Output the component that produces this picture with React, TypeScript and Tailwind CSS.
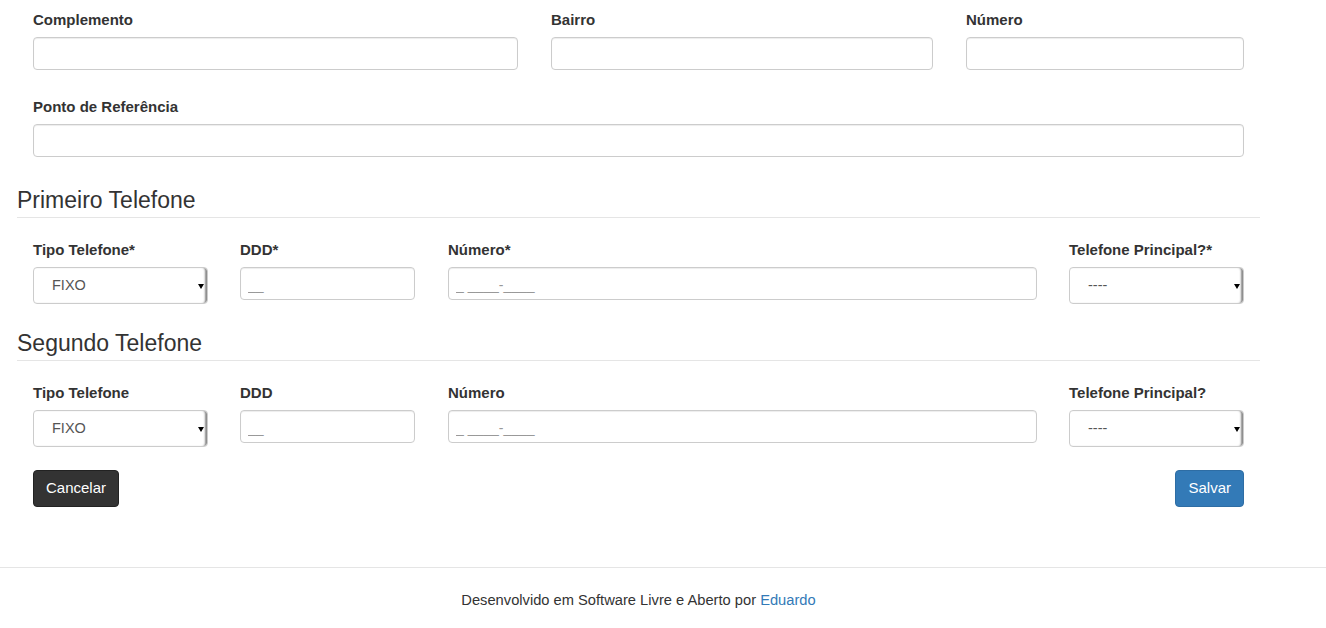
import { FC } from 'react';

const Label: FC<{ text: string }> = ({ text }) => (
  <label className="mb-[7px] block text-[15px] font-bold leading-[20px] text-[#333]">{text}</label>
);

const Input: FC<{ placeholder?: string }> = ({ placeholder }) => (
  <input
    type="text"
    placeholder={placeholder}
    className="block h-[33px] w-full rounded-[4px] border border-[#ccc] bg-white px-[7px] pt-[3px] text-[14px] text-[#555] shadow-[inset_0_1px_1px_rgba(0,0,0,0.075)] outline-none placeholder:text-[#999]"
  />
);

const Select: FC<{ value: string }> = ({ value }) => (
  <div className="flex h-[37px] w-full items-center justify-between rounded-[4px] border border-[#ccc] bg-white pl-[18px] text-[14.5px] text-[#555] shadow-[inset_-3px_0_2px_-1px_#8a8a8a]">
    <span>{value}</span>
    <span className="mr-[3px] mt-[1px] h-0 w-0 border-x-[3px] border-t-[5px] border-x-transparent border-t-black" />
  </div>
);

const Field: FC<{ label: string; className?: string; children: React.ReactNode }> = ({ label, className, children }) => (
  <div className={className}>
    <Label text={label} />
    {children}
  </div>
);

const Legend: FC<{ text: string }> = ({ text }) => (
  <div className="mb-[22px] border-b border-[#e5e5e5] pb-[2px] text-[23px] leading-[30px] text-[#333]">{text}</div>
);

const PhoneRow: FC<{ required?: boolean }> = ({ required }) => {
  const s = required ? '*' : '';
  return (
    <div className="flex px-[16px]">
      <Field label={`Tipo Telefone${s}`} className="w-[175px]">
        <Select value="FIXO" />
      </Field>
      <Field label={`DDD${s}`} className="ml-[32px] w-[175px]">
        <Input placeholder="__" />
      </Field>
      <Field label={`Número${s}`} className="ml-[33px] w-[589px]">
        <Input placeholder="_ ____-____" />
      </Field>
      <Field label={`Telefone Principal?${s}`} className="ml-[32px] w-[175px]">
        <Select value="----" />
      </Field>
    </div>
  );
};

const App: FC = () => {
  return (
    <div className="min-h-[628px] bg-white font-['Liberation_Sans',Arial,sans-serif] text-[14px] text-[#333]">
      <main className="w-[1260px] pl-[17px] pt-[10px]">
        <div className="grid grid-cols-[485px_382px_278px] gap-x-[33px] px-[16px]">
          <Field label="Complemento">
            <Input />
          </Field>
          <Field label="Bairro">
            <Input />
          </Field>
          <Field label="Número">
            <Input />
          </Field>
        </div>

        <div className="mt-[27px] px-[16px]">
          <Field label="Ponto de Referência">
            <Input />
          </Field>
        </div>

        <div className="mt-[28px]">
          <Legend text="Primeiro Telefone" />
          <PhoneRow required />
        </div>

        <div className="mt-[24px]">
          <Legend text="Segundo Telefone" />
          <PhoneRow />
        </div>

        <div className="mt-[23px] flex justify-between px-[16px]">
          <button className="h-[37px] rounded-[4px] border border-[#222] bg-[#333] px-[12px] text-[15px] text-white">
            Cancelar
          </button>
          <button className="h-[37px] rounded-[4px] border border-[#2e6da4] bg-[#337ab7] px-[12px] text-[15px] text-white">
            Salvar
          </button>
        </div>
      </main>

      <footer className="mt-[60px] border-t border-[#e5e5e5]">
        <div className="w-[1260px] pl-[17px] pt-[22px] text-center text-[14.7px] leading-[20px] text-[#333]">
          Desenvolvido em Software Livre e Aberto por <a className="text-[#337ab7]">Eduardo</a>
        </div>
      </footer>
    </div>
  );
};

export default App;
